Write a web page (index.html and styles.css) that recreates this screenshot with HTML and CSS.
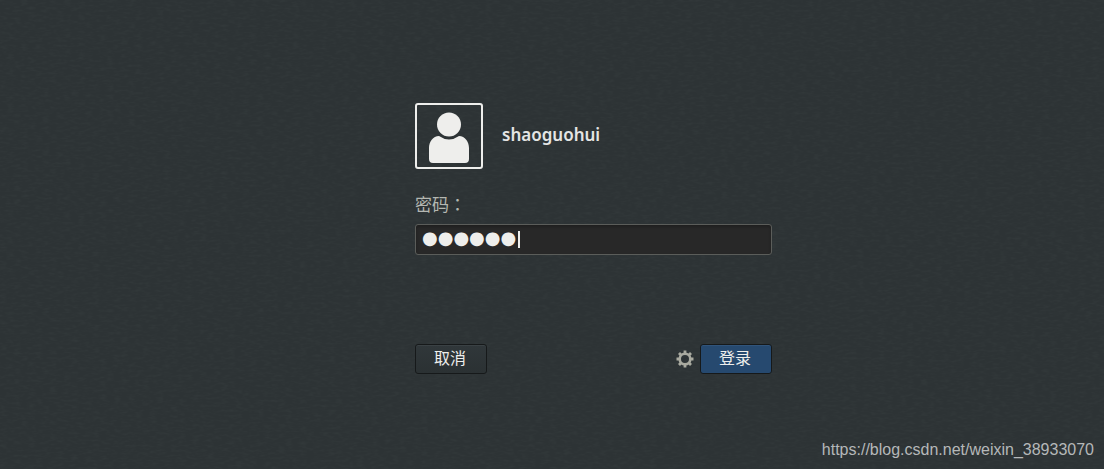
FILE: index.html
```
<!DOCTYPE html>
<html lang="zh-CN">
<head>
<meta charset="utf-8">
<meta name="viewport" content="width=device-width, initial-scale=1">
<title>登录</title>
<link rel="stylesheet" href="styles.css">
</head>
<body>
<svg class="grain" aria-hidden="true">
  <filter id="noise" x="0" y="0" width="100%" height="100%">
    <feTurbulence type="fractalNoise" baseFrequency="0.14 0.4" numOctaves="2" seed="4"/>
    <feColorMatrix values="0 0 0 0 0.5  0 0 0 0 0.6  0 0 0 0 0.55  0.5 0 0 0 -0.2"/>
  </filter>
  <rect width="100%" height="100%" filter="url(#noise)"/>
</svg>
<main class="screen">
  <form class="login">
    <div class="user">
      <svg class="avatar" viewBox="0 0 68 66" aria-hidden="true">
        <rect class="avatar-frame" x="1" y="1" width="66" height="64" rx="2"/>
        <circle class="avatar-fill" cx="34" cy="21.500" r="12"/>
        <path class="avatar-fill" d="M24 33Q34 40 44 33C50 33 54 39 54 45V56Q54 60 50 60H18Q14 60 14 56V45C14 39 18 33 24 33Z"/>
      </svg>
      <h1 class="name">shaoguohui</h1>
    </div>
    <label class="label" for="password">密码<span class="colon" lang="zh-Hant">：</span></label>
    <div class="field">
      <input class="input" id="password" type="text" value="●●●●●●" autocomplete="off">
      <span class="caret"></span>
    </div>
    <div class="actions">
      <button class="button" type="button">取消</button>
      <div class="group">
        <button class="gear" type="button" aria-label="会话">
          <svg class="gear-icon" viewBox="0 0 18 18" aria-hidden="true">
            <circle cx="9" cy="9" r="5.300" fill="none" stroke="currentColor" stroke-width="2.600"/>
            <path d="M9 .5V4M9 14v3.500M.5 9H4M14 9h3.500M3 3l2.500 2.500M12.500 12.500L15 15M3 15l2.500-2.500M12.500 5.500L15 3" stroke="currentColor" stroke-width="2.800"/>
          </svg>
        </button>
        <button class="button primary" type="submit">登录</button>
      </div>
    </div>
  </form>
  <footer class="source">https://blog.csdn.net/weixin_38933070</footer>
</main>
</body>
</html>
```
FILE: styles.css
```
* { box-sizing: border-box; }

body {
  margin: 0;
  background: #2d3335;
  color: #eeeeec;
  font-family: "Liberation Sans", "Noto Sans CJK SC", sans-serif;
}

.grain {
  position: absolute;
  inset: 0;
  width: 100%;
  height: 100%;
  opacity: 0.15;
}

.screen {
  position: relative;
  display: flex;
  flex-direction: column;
  align-items: center;
  min-height: 100vh;
  padding: 103px 10px 8px;
}

.login {
  width: 100%;
  max-width: 440px;
  padding-left: 83px;
}

.user {
  display: flex;
  align-items: center;
  gap: 19px;
}

.avatar {
  width: 68px;
  height: 66px;
}

.avatar-frame {
  fill: none;
  stroke: #eeeeec;
  stroke-width: 2;
}

.avatar-fill { fill: #eeeeec; }

.name {
  margin: 0;
  padding-bottom: 2px;
  color: #e4e5e4;
  font: 600 17px/24px "Noto Sans", sans-serif;
}

.label {
  display: block;
  margin: 23px 0 6px;
  color: #b4b7b1;
  font-size: 17px;
  line-height: 24px;
}

.colon { font-family: "Noto Sans CJK TC", sans-serif; }

.field { position: relative; }

.input {
  display: block;
  width: 100%;
  height: 31px;
  padding: 0 6px 4px;
  border: 1px solid #5b5d5a;
  border-radius: 3px;
  background: #282828;
  box-shadow: inset 0 2px 3px #1f1f1f;
  color: #eeeeec;
  font: 18px/26px "DejaVu Sans", sans-serif;
  outline: none;
}

.caret {
  position: absolute;
  top: 7px;
  left: 103px;
  width: 2px;
  height: 17px;
  background: #eeeeec;
}

.actions {
  display: flex;
  justify-content: space-between;
  margin-top: 89px;
}

.group {
  display: flex;
  align-items: center;
  gap: 6px;
}

.button {
  width: 72px;
  height: 30px;
  padding: 0 2px 4px 0;
  border: 1px solid #16191a;
  border-radius: 3px;
  background: linear-gradient(#30373a, #2b3133);
  box-shadow: inset 0 1px #3a4144;
  color: #eeeeec;
  font: 16px/24px "Noto Sans CJK SC", sans-serif;
}

.primary {
  background: #26496f;
  box-shadow: inset 0 1px #30547b;
}

.gear {
  display: flex;
  padding: 0;
  border: 0;
  background: none;
  color: #a9aaa0;
}

.gear-icon {
  width: 18px;
  height: 18px;
}

.source {
  align-self: flex-end;
  margin-top: auto;
  color: #b5b8b9;
  font-size: 16px;
  line-height: 22px;
}
```
